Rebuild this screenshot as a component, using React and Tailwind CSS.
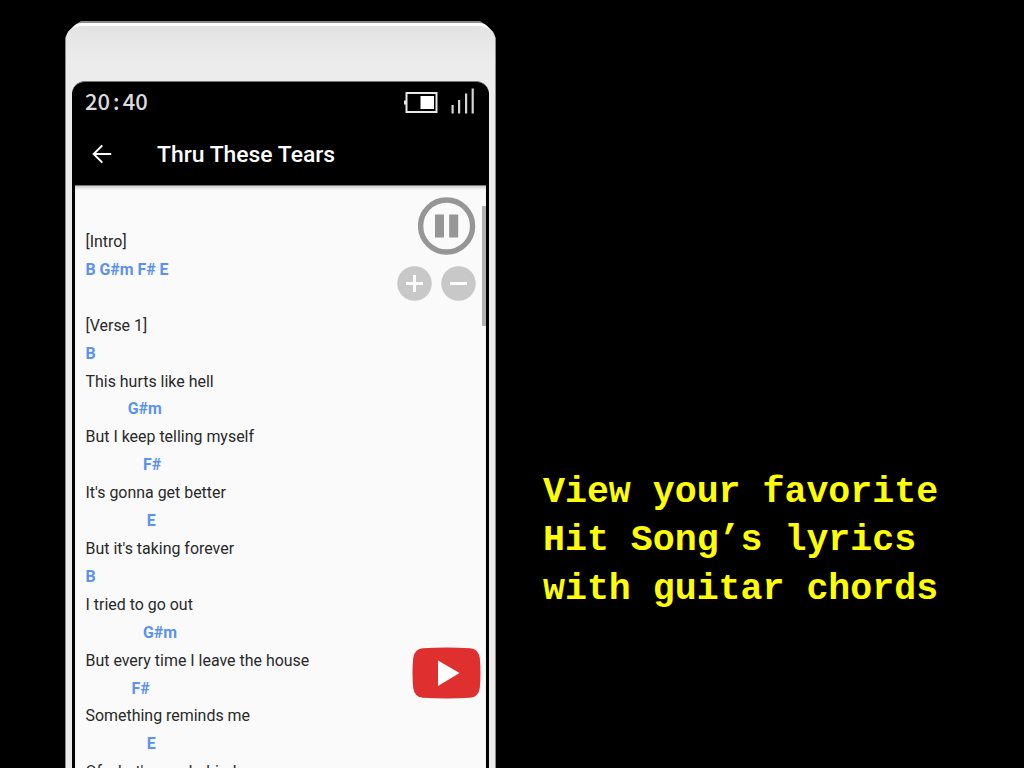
const LYRICS = [
  { text: '[Intro]' },
  { text: 'B G#m F# E', chord: true },
  { text: ' ' },
  { text: '[Verse 1]' },
  { text: 'B', chord: true },
  { text: 'This hurts like hell' },
  { text: '           G#m', chord: true },
  { text: 'But I keep telling myself' },
  { text: '               F#', chord: true },
  { text: "It's gonna get better" },
  { text: '                E', chord: true },
  { text: "But it's taking forever" },
  { text: 'B', chord: true },
  { text: 'I tried to go out' },
  { text: '               G#m', chord: true },
  { text: 'But every time I leave the house' },
  { text: '            F#', chord: true },
  { text: 'Something reminds me' },
  { text: '                E', chord: true },
  { text: "Of what's now behind me" },
]

/* ── Icons ── */

function BatteryIcon() {
  return (
    <svg className="w-[34px] h-[21px] mt-[3px]" viewBox="0 0 34 21" fill="none">
      <rect x="2.5" y="1" width="30" height="19" stroke="#e8e8e8" strokeWidth="2" />
      <rect x="0" y="8.5" width="2" height="4" fill="#e8e8e8" />
      <rect x="16.5" y="4" width="13.5" height="13" fill="#fff" />
    </svg>
  )
}

function SignalIcon() {
  return (
    <svg className="w-[24px] h-[26px]" viewBox="0 0 24 26" fill="#d4d4d4">
      <rect x="0.5" y="17" width="2.2" height="8.5" />
      <rect x="7" y="12" width="2.2" height="13.5" />
      <rect x="14" y="5.5" width="2.2" height="20" />
      <rect x="20.6" y="0.5" width="2.2" height="25" />
    </svg>
  )
}

function BackIcon() {
  return (
    <svg className="w-[20px] h-[20px]" viewBox="0 0 20 20" fill="none" stroke="#fff" strokeWidth="2">
      <path d="M19.2 10H2M10.3 1.4L1.7 10l8.6 8.6" />
    </svg>
  )
}

function PauseIcon() {
  return (
    <svg className="w-[58px] h-[58px]" viewBox="0 0 58 58">
      <circle cx="28.6" cy="29" r="26" fill="none" stroke="#969696" strokeWidth="5.4" />
      <rect x="17" y="17.5" width="9" height="23" fill="#969696" />
      <rect x="31.2" y="17.5" width="9" height="23" fill="#969696" />
    </svg>
  )
}

function RoundIcon({ plus }) {
  return (
    <svg className="w-[35px] h-[35px]" viewBox="0 0 35 35">
      <circle cx="17.5" cy="17.5" r="17.3" fill="#c8c8c8" />
      <path d={plus ? 'M9 17.5h17M17.5 9v17' : 'M9 17.5h17'} stroke="#fff" strokeWidth="3" />
    </svg>
  )
}

function VideoIcon() {
  return (
    <svg className="w-[69px] h-[52px]" viewBox="0 0 69 52">
      <path
        d="M11 1.2Q34.5 -0.2 58 1.2Q66.5 1.8 67.8 11Q69.2 26 67.8 41Q66.5 50.2 58 50.8Q34.5 52.2 11 50.8Q2.5 50.2 1.2 41Q-0.2 26 1.2 11Q2.5 1.8 11 1.2Z"
        fill="#e02f2f"
      />
      <path d="M26 13.5L47.5 26L26 39Z" fill="#fff" />
    </svg>
  )
}

/* ── Phone ── */

function PhoneScreen() {
  return (
    <div className="flex-1 min-h-0 flex flex-col bg-black rounded-t-[13px] border-t border-[#777] pl-[3px] pr-[3px]">
      <div className="h-[38px] shrink-0 flex items-center justify-between pl-[10px] pr-[11px]">
        <div className="font-['Noto_Sans_CJK_SC',sans-serif] font-medium text-[22px] leading-none text-[#dcdcdc] pb-[3px]">
          20<span className="mx-[3px]">:</span>40
        </div>
        <div className="flex items-center gap-[13px]">
          <BatteryIcon />
          <SignalIcon />
        </div>
      </div>

      <div className="h-[65px] shrink-0 flex items-center pl-[17px] gap-[45px] pt-[3px]">
        <BackIcon />
        <h1 className="text-[22.9px] leading-none font-medium text-white pt-[3px]">Thru These Tears</h1>
      </div>

      <div className="flex-1 min-h-0 flex justify-between bg-[#fafafa] border-t border-[#777] shadow-[inset_0_3px_3px_-1px_#ccc] overflow-hidden">
        <div className="pt-[42px] pl-[10.5px] text-[15.95px] leading-[27.9px]">
          {LYRICS.map((line, i) => (
            <div
              key={i}
              className={
                line.chord
                  ? 'whitespace-pre font-bold text-[#5b92ee] [word-spacing:-0.13px]'
                  : 'whitespace-pre text-[#292929]'
              }
            >
              {line.text}
            </div>
          ))}
        </div>

        <div className="flex">
          <div className="flex flex-col items-end pt-[11px] pr-[6px]">
            <PauseIcon />
            <div className="flex gap-[9px] mt-[11px]">
              <RoundIcon plus />
              <RoundIcon />
            </div>
            <div className="mt-[346px] -mr-[5px]">
              <VideoIcon />
            </div>
          </div>
          <div className="w-[4px] h-[120px] mt-[20px] bg-[#b0b0b0]" />
        </div>
      </div>
    </div>
  )
}

function Phone() {
  return (
    <div className="w-[431px] h-[747px] shrink-0 flex flex-col bg-[#8b8b8b] pt-[1.5px] px-[1px] [clip-path:polygon(0_17px,3px_11px,10px_4px,16px_0,415px_0,421px_4px,428px_11px,100%_17px,100%_100%,0_100%)]">
      <div className="flex-1 min-h-0 flex flex-col rounded-t-[16px] bg-[linear-gradient(#e3e3e3,#ececec_36px,#ececec)] border-t-[3px] border-white px-[6px]">
        <div className="h-[55.5px] shrink-0" />
        <PhoneScreen />
      </div>
    </div>
  )
}

export default function App() {
  return (
    <div className="w-[1024px] h-[768px] bg-black flex pt-[21px] pl-[65px] overflow-hidden font-[Roboto,sans-serif]">
      <Phone />
      <p className="mt-[448px] ml-[47px] whitespace-pre font-['Courier_New','Liberation_Mono',monospace] font-bold text-[36.6px] leading-[48.4px] text-[#ffff00]">
        {'View your favorite\nHit Song’s lyrics\nwith guitar chords'}
      </p>
    </div>
  )
}
